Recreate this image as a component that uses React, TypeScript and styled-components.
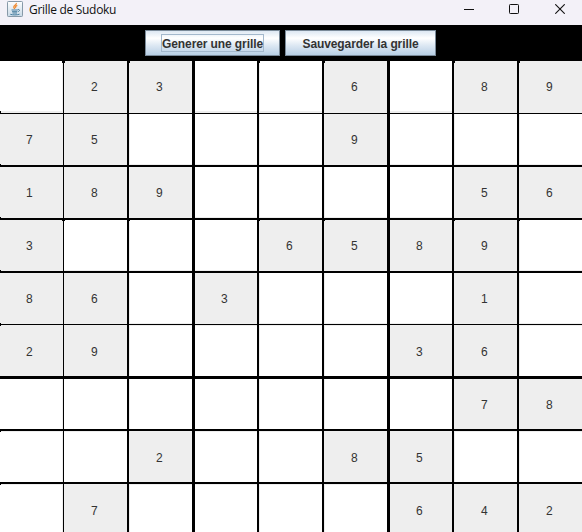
import React from 'react';
import styled, { createGlobalStyle } from 'styled-components';

const GlobalStyle = createGlobalStyle`
  * { box-sizing: border-box; }
  body { margin: 0; background: #000; overflow: hidden; }
`;

const Window = styled.div`
  width: 582px;
  height: 532px;
  display: flex;
  flex-direction: column;
  background: #000;
  overflow: hidden;
`;

const TitleBar = styled.header`
  height: 25px;
  flex: none;
  display: flex;
  align-items: flex-start;
  background: #f3f1f8;
  padding-left: 7px;
`;

const Title = styled.h1`
  margin: 1px 0 0 6px;
  flex: 1;
  font: 400 12px/17px 'Open Sans', sans-serif;
  letter-spacing: -0.3px;
  color: #111;
  white-space: nowrap;
`;

const WindowControls = styled.div`
  display: grid;
  grid-template-columns: 45px 46px 10px;
  padding: 4px 17px 0 0;
`;

const Toolbar = styled.div`
  height: 36px;
  flex: none;
  display: flex;
  justify-content: center;
  gap: 5px;
  padding: 5px 1px 0 0;
`;

const MetalButton = styled.button<{ $width: number }>`
  width: ${(p) => p.$width}px;
  height: 26px;
  padding: 0;
  display: flex;
  align-items: center;
  justify-content: center;
  border: 1px solid #7a8a99;
  border-radius: 0;
  background: linear-gradient(#dde8f3 0%, #ffffff 30%, #dde8f3 60%, #b8cfe5 100%);
  color: #333;
  font: bold 12px/18px 'Liberation Sans', Arial, sans-serif;
  letter-spacing: -0.1px;
`;

const ButtonLabel = styled.span<{ $focused?: boolean }>`
  height: 18px;
  border: 1px solid ${(p) => (p.$focused ? '#a3b8cc' : 'transparent')};
  white-space: nowrap;
`;

const COLUMNS = [64, 65, 66, 64, 65, 66, 64, 65, 63];
const ROWS = [53, 53, 53, 53, 52, 54, 52, 53, 48];
const COLUMN_LINES = [1, 2, 3, 2, 2, 3, 2, 2, 0];
const ROW_LINES = [1, 2, 2, 2, 1, 3, 2, 2, 0];
const TEXT_LEFT = [26, 27, 27, 26, 27, 27, 26, 27, 27];
const BASELINE = [30, 30, 30, 30, 30, 31, 30, 31, 31];

const Grid = styled.main`
  display: grid;
  grid-template-columns: ${COLUMNS.map((w) => `${w}px`).join(' ')};
  grid-template-rows: ${ROWS.map((h) => `${h}px`).join(' ')};
`;

const edgeShadow = (row: number, col: number) => {
  const edges: string[] = [];
  if (col === 0) edges.push('inset -1px 0 #eee');
  if (![0, 1, 3, 6].includes(col)) edges.push('inset 1px 0 #eee');
  if (row < 5) edges.push(`inset 0 ${row === 0 ? -2 : -1}px #eee`);
  if (row === 5 || row > 6) edges.push('inset 0 1px #eee');
  return edges.length ? edges.join(', ') : 'none';
};

const Cell = styled.div<{ $row: number; $col: number; $given: boolean }>`
  position: relative;
  border: 0 solid #000;
  border-right-width: ${(p) => COLUMN_LINES[p.$col]}px;
  border-bottom-width: ${(p) => ROW_LINES[p.$row]}px;
  padding: ${(p) => BASELINE[p.$row] - 11}px 0 0 ${(p) => TEXT_LEFT[p.$col]}px;
  background: ${(p) => (p.$given ? '#eee' : '#fff')};
  box-shadow: ${(p) => (p.$given ? 'none' : edgeShadow(p.$row, p.$col))};
  color: #333;
  font: 12px/14px 'Liberation Sans', Arial, sans-serif;
`;

/* Small black corner where the thick borders of neighbouring cells overlap. */
const Notch = styled.i<{ $height: number; $x: 'left' | 'right'; $y: 'top' | 'bottom' }>`
  position: absolute;
  ${(p) => p.$x}: 0;
  ${(p) => p.$y}: 0;
  width: 1px;
  height: ${(p) => p.$height}px;
  background: #000;
`;

const Corners = ({ row, col }: { row: number; col: number }) => {
  const blockTop = row === 0 || row === 3;
  const height = row === 0 ? 2 : 1;
  return (
    <>
      {blockTop && ![0, 3, 6].includes(col) && <Notch $height={height} $x="left" $y="top" />}
      {blockTop && col === 0 && <Notch $height={height} $x="right" $y="top" />}
      {col === 0 && row < 5 && <Notch $height={height} $x="left" $y="bottom" />}
      {col === 0 && (row === 5 || row > 6) && <Notch $height={1} $x="left" $y="top" />}
    </>
  );
};

const PUZZLE = [
  '.23..6.89',
  '75...9...',
  '189....56',
  '3...6589.',
  '86.3...1.',
  '29....36.',
  '.......78',
  '..2..85..',
  '.7....642',
];

const JavaIcon = () => (
  <svg width="16" height="17" viewBox="0 0 16 17" fill="none">
    <defs>
      <linearGradient id="tile" x1="0" y1="0" x2="0" y2="1">
        <stop offset="0" stopColor="#fdfeff" />
        <stop offset="1" stopColor="#c9d9e6" />
      </linearGradient>
    </defs>
    <rect x="0.5" y="1.5" width="15" height="15" rx="0.8" fill="url(#tile)" stroke="#8799a8" />
    <path d="M9.3 3c.6 2-3 2.6-2.5 4.2.2.7.8 1.100.9 1.800M10.300 5.300C8.500 6 8 6.900 8.900 7.900" stroke="#ef8a32" strokeWidth="1.3" />
    <path d="M4.500 10h6.200M5 11.700h5.300M5.500 13h4.500M10.700 9.600c2.200-.6 2.500 1.300.2 2.200M3.300 14.300c2.500.8 6.600.8 9.200-.1" stroke="#477d9f" strokeWidth="1" />
  </svg>
);

const MinimizeIcon = () => (
  <svg width="10" height="10" shapeRendering="crispEdges">
    <path d="M0 5.5h10" stroke="#111" />
  </svg>
);

const MaximizeIcon = () => (
  <svg width="10" height="10">
    <rect x="0.5" y="0.5" width="9" height="9" rx="0.8" fill="none" stroke="#111" />
  </svg>
);

const CloseIcon = () => (
  <svg width="10" height="10">
    <path d="M0.3 0.3l9.4 9.4M9.7 0.3l-9.4 9.4" stroke="#111" strokeWidth="1.1" />
  </svg>
);

export default function App() {
  return (
    <Window>
      <GlobalStyle />
      <TitleBar>
        <JavaIcon />
        <Title>Grille de Sudoku</Title>
        <WindowControls>
          <MinimizeIcon />
          <MaximizeIcon />
          <CloseIcon />
        </WindowControls>
      </TitleBar>
      <Toolbar>
        <MetalButton $width={135}>
          <ButtonLabel $focused>Generer une grille</ButtonLabel>
        </MetalButton>
        <MetalButton $width={151}>
          <ButtonLabel>Sauvegarder la grille</ButtonLabel>
        </MetalButton>
      </Toolbar>
      <Grid>
        {PUZZLE.flatMap((line, row) =>
          [...line].map((value, col) => (
            <Cell key={`${row}-${col}`} $row={row} $col={col} $given={value !== '.'}>
              {value !== '.' && value}
              <Corners row={row} col={col} />
            </Cell>
          )),
        )}
      </Grid>
    </Window>
  );
}
